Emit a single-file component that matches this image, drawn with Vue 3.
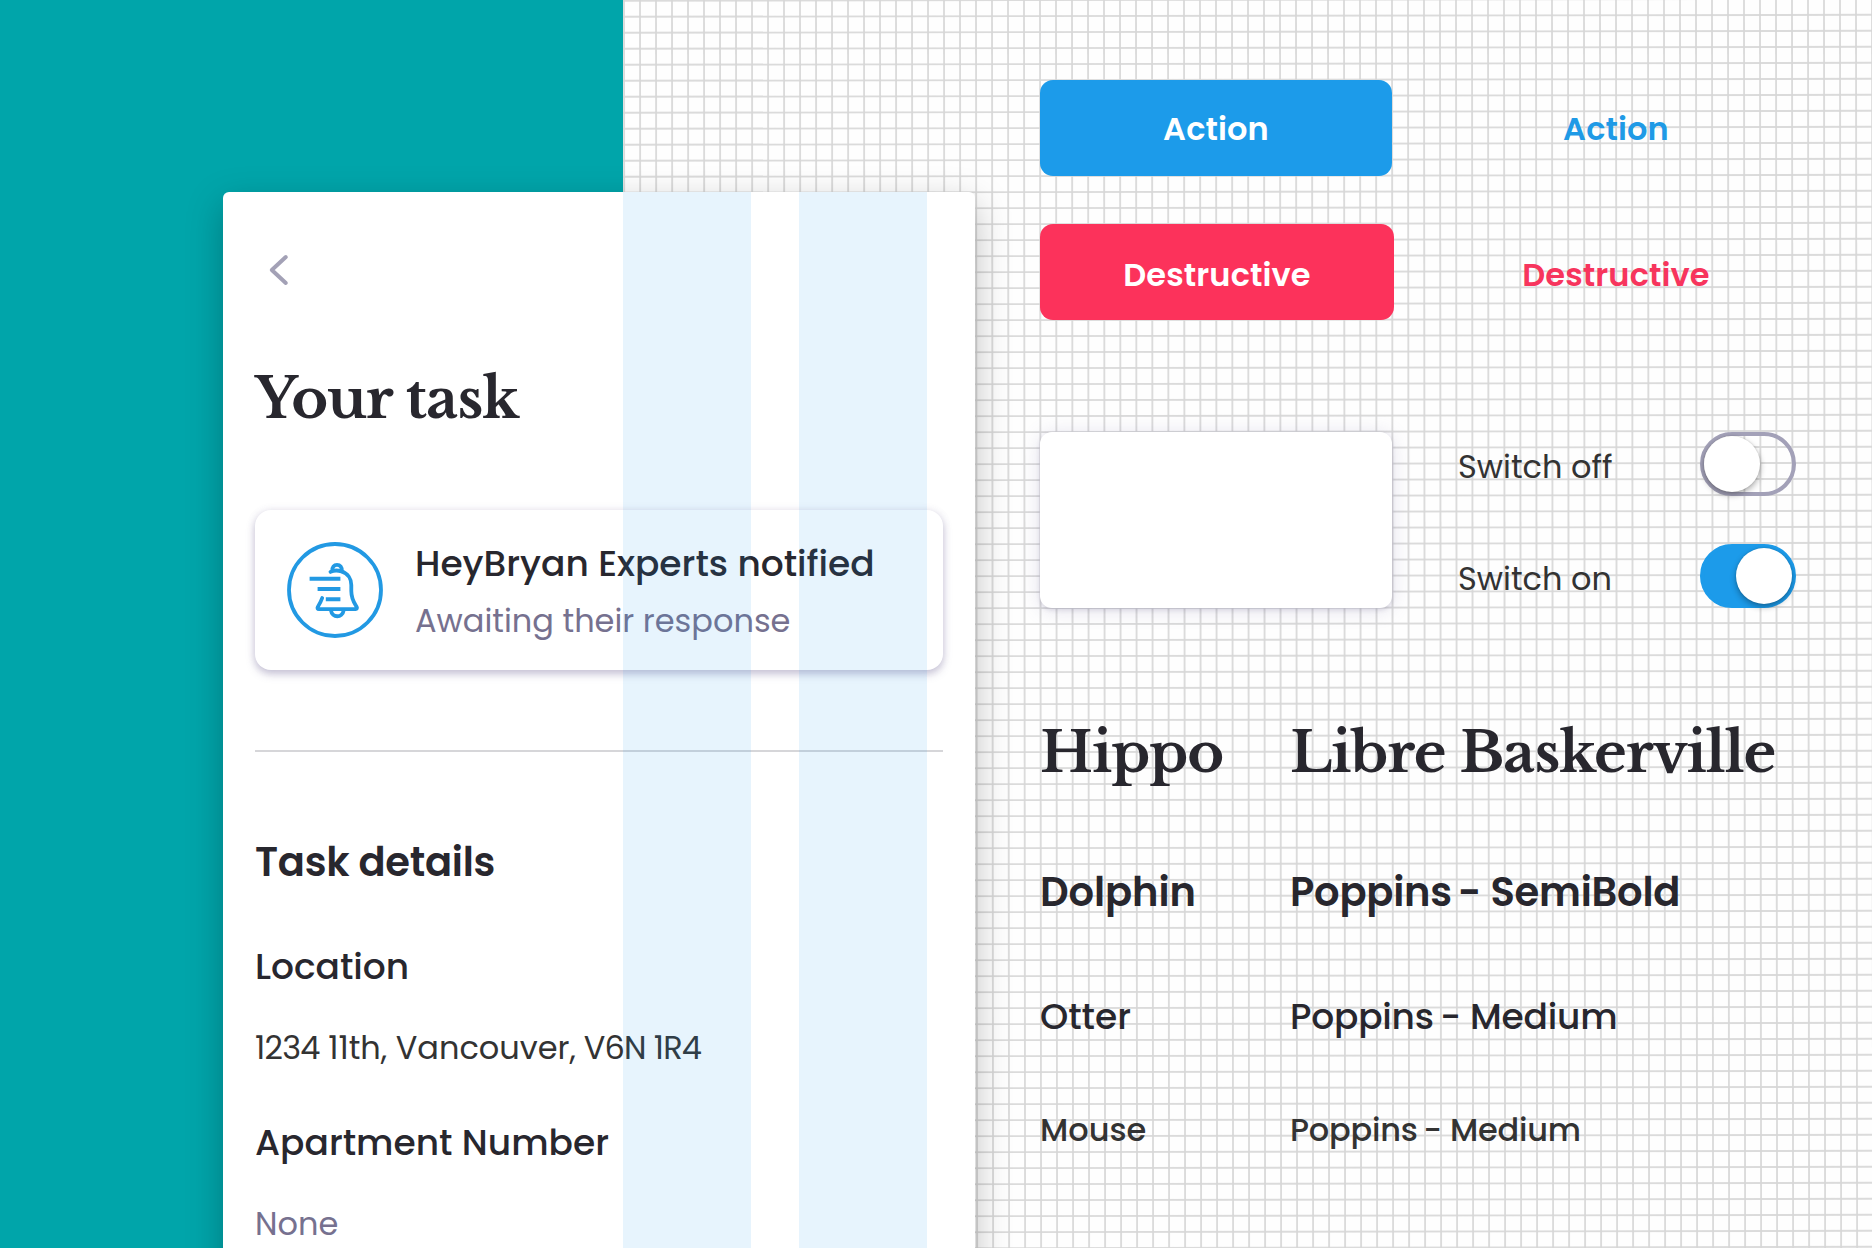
<script setup>
const verticals = Array.from({ length: 80 }, (_, i) => 624 + i * 16)
const horizontals = Array.from({ length: 80 }, (_, i) => 0.8 + i * 16)

// Values are split so that the groups with digits can be set tighter.
const details = [
  {
    label: 'Location',
    name: 'location',
    value: [
      { text: '1234', tight: true },
      { text: ' 11th, Vancouver,' },
      { text: ' V6N 1R4', tight: true },
    ],
  },
  { label: 'Apartment Number', name: 'apartment', value: [{ text: 'None' }] },
]

const typeScale = [
  { alias: 'Hippo', font: ['Libre Baskerville'], name: 'hippo' },
  { alias: 'Dolphin', font: ['Poppins', ' -', ' SemiBold'], name: 'dolphin' },
  { alias: 'Otter', font: ['Poppins', ' -', ' Medium'], name: 'otter' },
  { alias: 'Mouse', font: ['Poppins', ' -', ' Medium'], name: 'mouse' },
]
</script>

<template>
  <div class="stage">
    <div class="teal"></div>
    <svg class="paper" width="1249" height="1248" viewBox="623 0 1249 1248" aria-hidden="true">
      <g stroke="#d6d6d6" stroke-opacity="0.88" stroke-width="1.9">
        <line v-for="x in verticals" :key="'v' + x" :x1="x" y1="0" :x2="x + 1.1" y2="1248" />
        <line v-for="y in horizontals" :key="'h' + y" x1="623" :y1="y" x2="1872" :y2="y - 2" />
      </g>
    </svg>

    <main class="layout">
      <section class="screen">
        <svg class="back" width="24" height="36" viewBox="0 0 24 36">
          <path d="M18.8 5 L4.8 18 L18.8 31" fill="none" stroke="#a3a1b6" stroke-width="4" stroke-linecap="round" stroke-linejoin="round" />
        </svg>
        <h1 class="title">Your task</h1>

        <div class="notice">
          <svg class="bell" width="96" height="96" viewBox="0 0 96 96" fill="none" stroke="#2299e3" stroke-width="3.8" stroke-linecap="round" stroke-linejoin="round">
            <circle cx="48" cy="48" r="46" />
            <path d="M45.4 28.6 C45 25 47 22.9 50 22.9 C53 22.9 55.2 25 54.9 29.4" />
            <path d="M43.5 29.9 C46 28.6 51 28.3 54.5 29.4 C61 31.5 64.3 37 64.3 43 V49 C64.3 57 67 60.5 69.6 64.8 C70.4 66.2 69.8 67.2 68.6 67.2 H32 C30.6 67.2 30.1 66.2 30.8 64.9 C32.8 61.5 34 59.5 35.2 56" />
            <path d="M44 68.5 C45 76.2 55.5 76.2 56.6 68.5" />
            <path d="M24.6 36.8 H51.4 M32.6 47 H51.4 M40.8 57.2 H51.4" stroke-width="4" stroke-linecap="square" />
          </svg>
          <div class="notice-text">
            <div class="notice-title">HeyBryan Experts notified</div>
            <div class="notice-sub">Awaiting their response</div>
          </div>
        </div>

        <div class="divider"></div>
        <h2 class="section">Task details</h2>

        <div v-for="d in details" :key="d.name" class="detail" :class="d.name">
          <div class="label">{{ d.label }}</div>
          <div class="value"><span v-for="part in d.value" :key="part.text" :class="{ tight: part.tight }">{{ part.text }}</span></div>
        </div>

        <div class="columns"><i></i><i></i></div>
      </section>

      <section class="kit">
        <div class="button-row">
          <button class="button action">Action</button>
          <a class="link action-link">Action</a>
        </div>
        <div class="button-row second">
          <button class="button destructive">Destructive</button>
          <a class="link destructive-link">Destructive</a>
        </div>

        <div class="samples">
          <div class="blank"></div>
          <div class="switches">
            <div class="switch-row">
              <span class="switch-label">Switch off</span>
              <span class="switch off"><b></b></span>
            </div>
            <div class="switch-row">
              <span class="switch-label">Switch on</span>
              <span class="switch on"><b></b></span>
            </div>
          </div>
        </div>

        <div class="scale">
          <div v-for="t in typeScale" :key="t.name" class="type-row" :class="t.name">
            <div>{{ t.alias }}</div>
            <div class="font"><span v-for="part in t.font" :key="part">{{ part }}</span></div>
          </div>
        </div>
      </section>
    </main>
  </div>
</template>

<style>
body {
  margin: 0;
  overflow: hidden;
}
</style>

<style scoped>
.stage {
  position: relative;
  width: 1872px;
  height: 1248px;
  overflow: hidden;
  background: #fefefe;
  color: #28272e;
  font-family: Poppins, Inter, "Open Sans", sans-serif;
}
.teal {
  position: absolute;
  inset: 0 auto 0 0;
  width: 623px;
  background: #00a5aa;
}
.paper {
  position: absolute;
  top: 0;
  left: 623px;
}
.layout {
  position: relative;
  display: flex;
  height: 1248px;
}
.layout * {
  box-sizing: border-box;
  white-space: pre;
}

.screen {
  position: relative;
  flex: none;
  width: 752px;
  height: 1120px;
  margin: 192px 0 0 223px;
  padding: 60px 32px 0;
  border-radius: 6px;
  background: #fff;
  box-shadow: 0 12px 36px rgba(0, 0, 0, 0.26);
}
.back {
  display: block;
  margin-left: 12px;
}
.title {
  margin: 71px 0 0;
  font: 700 56px/80px "Libre Baskerville", "Liberation Serif", serif;
  letter-spacing: -1px;
}
.notice {
  display: flex;
  height: 160px;
  margin-top: 71px;
  padding: 32px;
  border-radius: 16px;
  background: #fff;
  box-shadow: 0 4px 8px rgba(110, 100, 150, 0.38), 0 0 8px rgba(110, 100, 150, 0.1);
}
.bell {
  flex: none;
}
.notice-text {
  margin: -2.5px 0 0 32px;
}
.notice-title {
  font-size: 36px;
  font-weight: 500;
  line-height: 48px;
}
.notice-sub {
  margin-top: 11px;
  color: #76718f;
  font-size: 32px;
  line-height: 44px;
}
.divider {
  height: 2px;
  margin-top: 80px;
  background: #d6d6d9;
}
.section {
  margin: 82px 0 0;
  font-size: 40px;
  font-weight: 600;
  line-height: 56px;
  letter-spacing: -0.28px;
}
.detail {
  margin-top: 49px;
}
.section + .detail {
  margin-top: 53px;
}
.label {
  font-size: 36px;
  font-weight: 500;
  line-height: 48px;
}
.value {
  margin-top: 35px;
  color: #333;
  font-size: 32px;
  line-height: 44px;
}
.tight {
  letter-spacing: -0.75px;
}
.apartment .value {
  color: #76718f;
}
.columns {
  position: absolute;
  inset: 0 48px 0 400px;
  display: flex;
  gap: 48px;
}
.columns i {
  width: 128px;
  background: rgba(28, 155, 234, 0.104);
}

.kit {
  flex: none;
  width: 832px;
  margin-left: 65px;
  padding-top: 80px;
}
.button-row {
  display: flex;
  justify-content: space-between;
  width: 752px;
  height: 96px;
}
.second {
  margin-top: 48px;
}
.button,
.link {
  display: flex;
  align-items: center;
  justify-content: center;
  width: 352px;
  height: 96px;
  padding: 2px 0 0;
  border: 0;
  border-radius: 13px;
  color: #fff;
  font: 600 32px/48px Poppins, Inter, sans-serif;
  letter-spacing: 0.12px;
}
.action {
  background: #1c9bea;
}
.destructive {
  width: 354px;
  background: #fc325b;
}
.second .button,
.second .link {
  padding-top: 5px;
}
.action-link {
  color: #1f9ae6;
}
.destructive-link {
  color: #f7355d;
}
.samples {
  display: flex;
  margin-top: 112px;
}
.blank {
  width: 352px;
  height: 176px;
  border-radius: 12px;
  background: #fff;
  box-shadow: 0 2px 4px rgba(80, 75, 110, 0.16), 0 2px 20px rgba(110, 100, 160, 0.2);
}
.switches {
  display: flex;
  flex-direction: column;
  justify-content: space-between;
  width: 338px;
  margin-left: 66px;
}
.switch-row {
  display: flex;
  justify-content: space-between;
  height: 64px;
}
.switch-label {
  padding-top: 3px;
  color: #333;
  font-size: 32px;
  line-height: 64px;
}
.switch {
  display: flex;
  width: 96px;
  height: 64px;
  border: 4px solid #a3a1b8;
  border-radius: 32px;
}
.switch b {
  width: 56px;
  height: 56px;
  border-radius: 50%;
  background: #fff;
  box-shadow: 0 3px 6px rgba(0, 0, 0, 0.32), 0 0 2px rgba(0, 0, 0, 0.18);
}
.on {
  justify-content: flex-end;
  border-color: #1c9bea;
  background: #1c9bea;
}

.scale {
  margin-top: 105px;
}
.type-row {
  display: grid;
  grid-template-columns: 250px auto;
}
.font span:nth-child(2) {
  word-spacing: -0.08em;
}
.hippo {
  font: 700 56px/80px "Libre Baskerville", "Liberation Serif", serif;
  letter-spacing: -1px;
}
.dolphin {
  margin-top: 71px;
  font-size: 40px;
  font-weight: 600;
  line-height: 56px;
  letter-spacing: -0.1px;
}
.otter {
  margin-top: 73px;
  font-size: 36px;
  font-weight: 500;
  line-height: 48px;
}
.mouse {
  margin-top: 67px;
  color: #333;
  font-size: 32px;
  font-weight: 500;
  line-height: 44px;
}
.dolphin .font,
.otter .font {
  letter-spacing: -0.22px;
}
.mouse .font {
  letter-spacing: -0.2px;
}
</style>
